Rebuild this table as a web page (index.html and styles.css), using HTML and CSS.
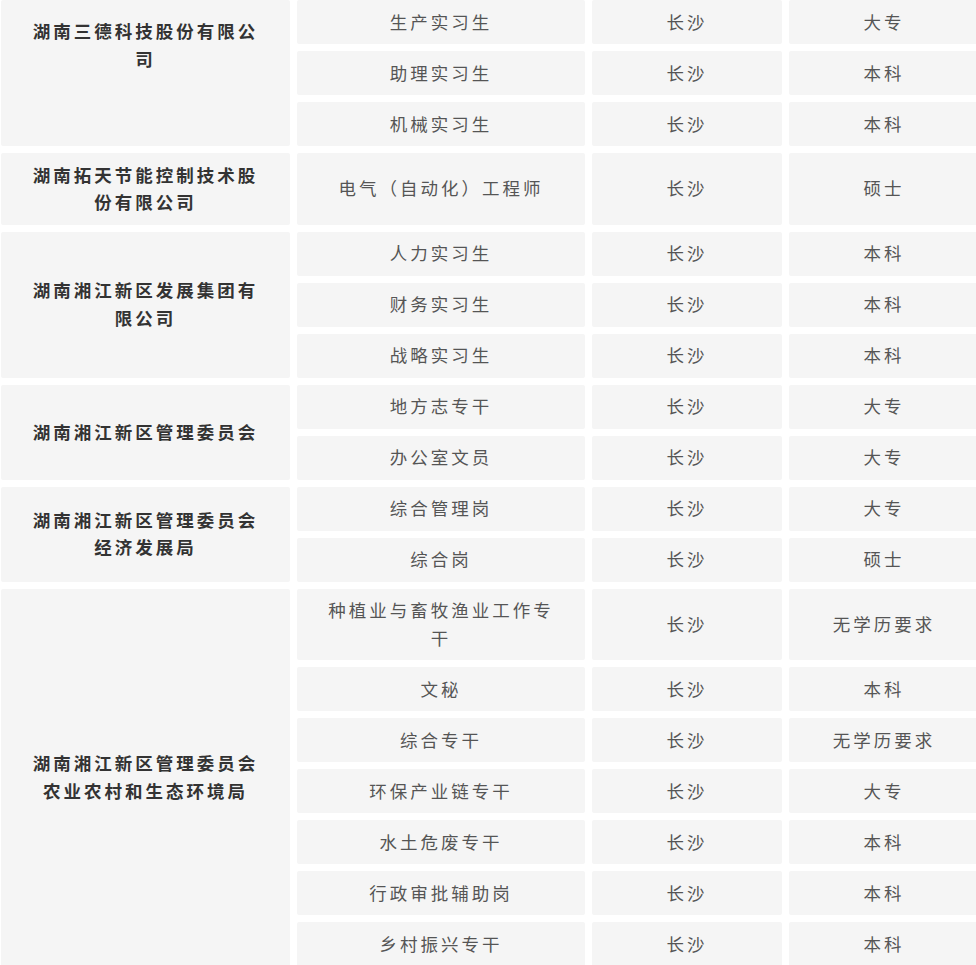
FILE: index.html
```html
<!DOCTYPE html>
<html lang="zh-CN">
<head>
<meta charset="utf-8">
<title>岗位表</title>
<link rel="stylesheet" href="styles.css">
</head>
<body>
<div class="wrap">
<table class="jobs">
<colgroup>
<col class="c-org"><col class="c-job"><col class="c-city"><col class="c-edu">
</colgroup>
<tbody>
<tr><td class="org first" rowspan="3">湖南三德科技股份有限公司</td><td>生产实习生</td><td>长沙</td><td>大专</td></tr>
<tr><td>助理实习生</td><td>长沙</td><td>本科</td></tr>
<tr><td>机械实习生</td><td>长沙</td><td>本科</td></tr>
<tr><td class="org">湖南拓天节能控制技术股份有限公司</td><td>电气（自动化）工程师</td><td>长沙</td><td>硕士</td></tr>
<tr><td class="org" rowspan="3">湖南湘江新区发展集团有限公司</td><td>人力实习生</td><td>长沙</td><td>本科</td></tr>
<tr><td>财务实习生</td><td>长沙</td><td>本科</td></tr>
<tr><td>战略实习生</td><td>长沙</td><td>本科</td></tr>
<tr><td class="org" rowspan="2">湖南湘江新区管理委员会</td><td>地方志专干</td><td>长沙</td><td>大专</td></tr>
<tr><td>办公室文员</td><td>长沙</td><td>大专</td></tr>
<tr><td class="org" rowspan="2">湖南湘江新区管理委员会<br>经济发展局</td><td>综合管理岗</td><td>长沙</td><td>大专</td></tr>
<tr><td>综合岗</td><td>长沙</td><td>硕士</td></tr>
<tr><td class="org" rowspan="7">湖南湘江新区管理委员会<br>农业农村和生态环境局</td><td>种植业与畜牧渔业工作专干</td><td>长沙</td><td>无学历要求</td></tr>
<tr><td>文秘</td><td>长沙</td><td>本科</td></tr>
<tr><td>综合专干</td><td>长沙</td><td>无学历要求</td></tr>
<tr><td>环保产业链专干</td><td>长沙</td><td>大专</td></tr>
<tr><td>水土危废专干</td><td>长沙</td><td>本科</td></tr>
<tr><td>行政审批辅助岗</td><td>长沙</td><td>本科</td></tr>
<tr><td>乡村振兴专干</td><td>长沙</td><td>本科</td></tr>
</tbody>
</table>
</div>
</body>
</html>
```

FILE: styles.css
```css
html, body {
  margin: 0;
  padding: 0;
  background: #ffffff;
}
body {
  overflow: hidden;
}
.wrap {
  width: 976px;
  height: 965px;
  overflow: hidden;
}
.jobs {
  table-layout: fixed;
  width: 992px;
  border-collapse: separate;
  border-spacing: 7px;
  margin: -7px 0 0 -6px;
  font-family: "Noto Sans CJK SC", "Noto Sans", sans-serif;
  font-size: 17.5px;
  line-height: 27.5px;
  letter-spacing: 3px;
  color: #555555;
}
.c-org { width: 289px; }
.c-job { width: 288px; }
.c-city { width: 190px; }
.c-edu { width: 190px; }
.jobs td {
  background: #f5f5f5;
  text-align: center;
  vertical-align: middle;
  padding: 7.5px 26px 9px;
  border-radius: 2px;
}
.jobs td.org {
  font-weight: 700;
  color: #333333;
}
.jobs td.first {
  vertical-align: top;
  padding-top: 17px;
}
```
